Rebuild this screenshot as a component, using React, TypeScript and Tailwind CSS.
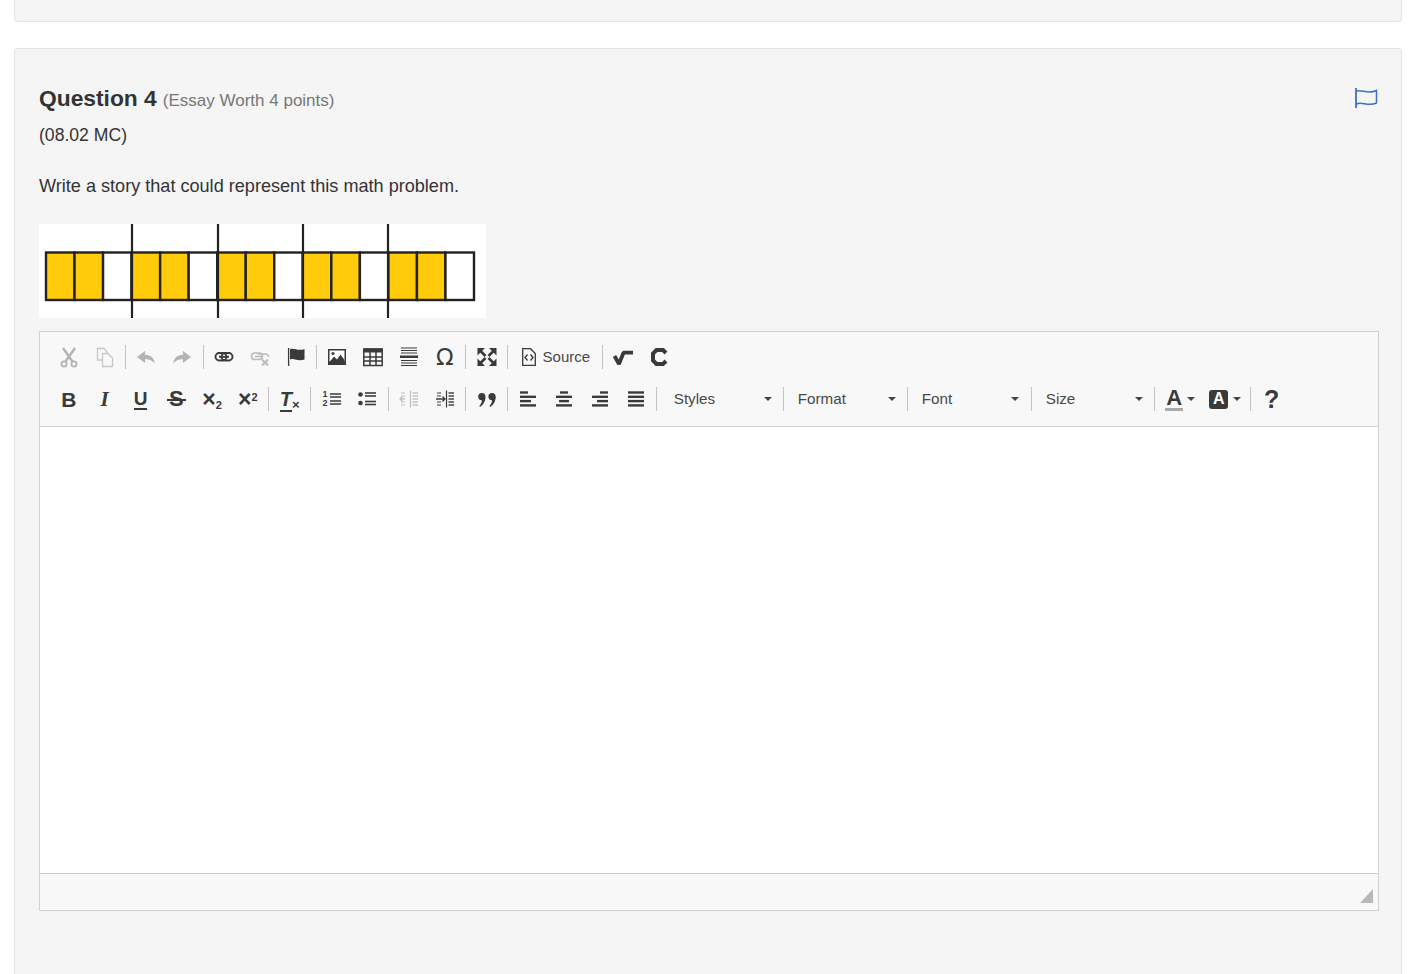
import React from "react";

const DARK = "#3a3a3a";
const GRAY = "#b4b4b4";

function Ico({ children }: { children: React.ReactNode }) {
  return (
    <svg width="24" height="24" viewBox="0 0 24 24" fill="none">
      {children}
    </svg>
  );
}

function Btn({ children }: { children: React.ReactNode }) {
  return <div className="flex h-full w-[35.8px] shrink-0 items-center justify-center">{children}</div>;
}

function Sep() {
  return (
    <div className="flex h-full w-[6px] shrink-0 items-center justify-center">
      <div className="h-[24px] w-px bg-[#c4c4c4]" />
    </div>
  );
}

function Caret() {
  return <div className="h-0 w-0 border-x-[4px] border-t-[4px] border-x-transparent border-t-[#444]" />;
}

function Combo({ label, w }: { label: string; w: string }) {
  return (
    <div className={`flex h-full shrink-0 items-center justify-between text-[15.2px] text-[#484848] ${w}`}>
      <span>{label}</span>
      <Caret />
    </div>
  );
}

const Cut = () => (
  <Ico>
    <g stroke={GRAY} strokeWidth="2.4">
      <path d="M6 3 L15.5 16.5" />
      <path d="M18 3 L8.5 16.5" />
      <circle cx="7" cy="19" r="2.6" strokeWidth="1.8" />
      <circle cx="17" cy="19" r="2.6" strokeWidth="1.8" />
    </g>
  </Ico>
);
const Copy = () => (
  <Ico>
    <g stroke="#c6c6c6" strokeWidth="1.3" fill="#f8f8f8">
      <path d="M4.5 3.5 H11 L14 6.5 V15 H4.5 Z" />
      <path d="M9.5 8.5 H15 L19.5 13 V21.5 H9.5 Z" />
    </g>
  </Ico>
);
const Undo = ({ flip }: { flip?: boolean }) => (
  <Ico>
    <path
      d="M3 12 L11 6 V9.8 C16 9.8 19.8 12.5 21 18.5 C18 15 15 14.2 11 14.2 V18 Z"
      fill={GRAY}
      transform={flip ? "translate(24 0) scale(-1 1)" : undefined}
    />
  </Ico>
);
const LinkI = () => (
  <Ico>
    <g stroke={DARK} strokeWidth="1.9">
      <rect x="3.5" y="8" width="11" height="7.5" rx="3.7" />
      <rect x="9.5" y="8" width="11" height="7.5" rx="3.7" />
      <path d="M7 11.8 H17" />
    </g>
  </Ico>
);
const Unlink = () => (
  <Ico>
    <g stroke="#bcbcbc" strokeWidth="1.6">
      <rect x="3.5" y="8" width="11" height="6.5" rx="3.2" />
      <path d="M9.5 9 H17 C19 9 20.5 10 20.5 12" />
      <path d="M7 11.5 H14" />
      <path d="M14 14.5 L20 20.5 M20 14.5 L14 20.5" strokeWidth="2" />
    </g>
  </Ico>
);
const Flag = () => (
  <Ico>
    <path d="M4.6 3 V21" stroke={DARK} strokeWidth="1.3" />
    <path d="M6 4.2 C10 2.5 14 6.5 20.5 4 V14.5 C14 17 10 12.5 6 14.5 Z" fill={DARK} />
  </Ico>
);
const ImageI = () => (
  <Ico>
    <rect x="3" y="4" width="18" height="16" fill={DARK} />
    <rect x="4.5" y="5.5" width="15" height="11" fill="#fff" />
    <circle cx="8" cy="8.5" r="1.6" fill={DARK} />
    <path d="M4.5 17 L9 11.5 L12 14.5 L15.5 9.5 L19.5 15 V17 Z" fill={DARK} />
  </Ico>
);
const TableI = () => (
  <Ico>
    <rect x="2.5" y="3.5" width="19" height="4" fill={DARK} />
    <g stroke={DARK} strokeWidth="1.5">
      <rect x="2.8" y="4" width="18.4" height="16.5" />
      <path d="M9 7 V20 M15 7 V20 M3 12 H21 M3 16 H21" />
    </g>
  </Ico>
);
const Hr = () => (
  <Ico>
    <g fill={DARK}>
      <rect x="4" y="2.5" width="16" height="1" />
      <rect x="4" y="5" width="16" height="1" />
      <rect x="4" y="7.5" width="16" height="1" />
      <rect x="3" y="10.5" width="18" height="2.5" />
      <rect x="4" y="15" width="16" height="1" />
      <rect x="4" y="17.5" width="16" height="1" />
      <rect x="4" y="20" width="16" height="1" />
    </g>
  </Ico>
);
const Maximize = () => (
  <Ico>
    <g fill={DARK} stroke={DARK}>
      <path d="M2.5 3 H10 L2.5 10.5 Z" strokeWidth="0" />
      <path d="M21.5 3 H14 L21.5 10.5 Z" strokeWidth="0" />
      <path d="M2.5 21 H10 L2.5 13.5 Z" strokeWidth="0" />
      <path d="M21.5 21 H14 L21.5 13.5 Z" strokeWidth="0" />
      <path d="M5 5.5 L10.5 11 M19 5.5 L13.5 11 M5 18.5 L10.5 13 M19 18.5 L13.5 13" strokeWidth="2.6" />
    </g>
  </Ico>
);
const SourceI = () => (
  <svg width="18" height="22" viewBox="0 0 18 22" fill="none">
    <path d="M2.7 2.7 H10.5 L15.3 7.5 V19.3 H2.7 Z" stroke={DARK} strokeWidth="1.3" />
    <path d="M7.5 8.5 L5 11.5 L7.5 14.5 M10.5 8.5 L13 11.5 L10.5 14.5" stroke={DARK} strokeWidth="1.4" />
  </svg>
);
const Sqrt = () => (
  <Ico>
    <path d="M3.5 11 L8 19 L12.5 7.7 H22" stroke={DARK} strokeWidth="3.8" strokeLinejoin="bevel" />
  </Ico>
);
const CIcon = () => (
  <Ico>
    <path d="M19 8 L16 5 H9.5 L6 8.5 V15.5 L9.5 19 H16 L19 16" stroke={DARK} strokeWidth="4" />
  </Ico>
);
const Strike = () => (
  <span className="relative text-[22px] font-bold leading-none text-[#3a3a3a]">
    S
    <span className="absolute left-[-2px] right-[-2px] top-[11px] h-[2px] bg-[#3a3a3a]" />
  </span>
);
const Lines = ({ x1, x2, ys, w = 1.8, c = DARK }: { x1: number; x2: number; ys: number[]; w?: number; c?: string }) => (
  <g stroke={c} strokeWidth={w}>
    {ys.map((y) => (
      <path key={y} d={`M${x1} ${y} H${x2}`} />
    ))}
  </g>
);
const ListOl = () => (
  <div className="flex items-center gap-[2px]">
    <div className="flex w-[6px] flex-col items-center text-[9px] font-bold leading-[9px] text-[#3a3a3a]">
      <span>1</span>
      <span>2</span>
    </div>
    <svg width="11" height="16" viewBox="0 0 11 16">
      <Lines x1={0} x2={11} ys={[3, 6, 10, 13]} w={1.5} />
    </svg>
  </div>
);
const ListUl = () => (
  <Ico>
    <circle cx="5.5" cy="7.5" r="2.3" fill={DARK} />
    <circle cx="5.5" cy="16" r="2.3" fill={DARK} />
    <Lines x1={10} x2={21} ys={[6, 9, 14.5, 17.5]} w={1.6} />
  </Ico>
);
const Indent = ({ c, out }: { c: string; out?: boolean }) => (
  <Ico>
    <path d="M13.5 3.5 V20.5" stroke={c} strokeWidth="1.2" />
    <Lines x1={15.5} x2={21} ys={[6, 9, 12, 15, 18]} w={1.4} c={c} />
    <Lines x1={4} x2={8} ys={[6, 9, 15, 18]} w={1} c={c} />
    {out ? (
      <path d="M3 12 H8 M5.5 9.5 L3 12 L5.5 14.5" stroke={c} strokeWidth="1.3" />
    ) : (
      <path d="M3 12 H12 M9.5 9.5 L12 12 L9.5 14.5" stroke={c} strokeWidth="1.3" />
    )}
  </Ico>
);
const Quote = () => (
  <Ico>
    <g fill={DARK}>
      <circle cx="6.8" cy="9.6" r="3.6" />
      <path d="M10.4 9.6 C10.6 14 8.5 18 5 20 L4.3 19 C6 17 7 15 7 12.5 Z" />
      <circle cx="17" cy="9.6" r="3.6" />
      <path d="M20.6 9.6 C20.8 14 18.7 18 15.2 20 L14.5 19 C16.2 17 17.2 15 17.2 12.5 Z" />
    </g>
  </Ico>
);
const Align = ({ rows }: { rows: [number, number][] }) => (
  <Ico>
    {rows.map(([a, b], i) => (
      <path key={i} d={`M${a} ${5.5 + i * 4.3} H${b}`} stroke={DARK} strokeWidth="2.4" />
    ))}
  </Ico>
);

function Chart() {
  const x0 = 7;
  const cw = 428 / 15;
  const cells = Array.from({ length: 15 }, (_, i) => i);
  return (
    <svg width="447" height="94" viewBox="0 0 447 94" className="block bg-white">
      {cells.map((i) => (
        <rect
          key={i}
          x={x0 + i * cw}
          y="28.5"
          width={cw}
          height="47.5"
          fill={i % 3 === 2 ? "#ffffff" : "#ffcb0a"}
          stroke="#222"
          strokeWidth="2.4"
        />
      ))}
      {[93, 179, 264, 349].map((x) => (
        <path key={x} d={`M${x} 0 V94`} stroke="#222" strokeWidth="2.2" />
      ))}
    </svg>
  );
}

export default function App() {
  return (
    <div className="h-[974px] overflow-hidden bg-white pl-[14px] pr-[20px] text-[#333] [font-family:'Liberation_Sans',Arial,sans-serif]">
      <div className="h-[22px] rounded-b-[4px] border-x border-b border-[#e3e3e3] bg-[#f5f5f5]" />
      <div className="mt-[26px] h-[940px] rounded-[4px] border border-[#e3e3e3] bg-[#f5f5f5] pl-[24px] pr-[22px] pt-[34px]">
        <div className="flex h-[30px] items-center justify-between">
          <div className="flex items-baseline gap-[6px]">
            <h2 className="text-[22.8px] font-bold leading-[30px] text-[#333]">Question 4</h2>
            <span className="text-[17px] text-[#777]">(Essay Worth 4 points)</span>
          </div>
          <svg width="26" height="24" viewBox="0 0 26 24" fill="none" className="mr-[-1px]">
            <path d="M2 2 V22" stroke="#3f6fc6" strokeWidth="1.8" />
            <path d="M2.5 5 C8 3 14 9 22.5 4.5 V17 C14 21 8 15 2.5 18" stroke="#3f6fc6" strokeWidth="1.5" />
          </svg>
        </div>
        <p className="mt-[9px] text-[17.6px] leading-[26px]">(08.02 MC)</p>
        <p className="mt-[25px] text-[18.1px] leading-[26px]">Write a story that could represent this math problem.</p>
        <div className="mt-[25px]">
          <Chart />
        </div>
        <div className="mt-[13px] border border-[#d1d1d1] bg-white">
          <div className="border-b border-[#d1d1d1] bg-[#f8f8f8] pb-[6px] pl-[11px] pt-[4px]">
            <div className="flex h-[42px] items-center">
              <Btn><Cut /></Btn>
              <Btn><Copy /></Btn>
              <Sep />
              <Btn><Undo /></Btn>
              <Btn><Undo flip /></Btn>
              <Sep />
              <Btn><LinkI /></Btn>
              <Btn><Unlink /></Btn>
              <Btn><Flag /></Btn>
              <Sep />
              <Btn><ImageI /></Btn>
              <Btn><TableI /></Btn>
              <Btn><Hr /></Btn>
              <Btn><span className="text-[23px] leading-none text-[#3a3a3a] [font-family:'DejaVu_Sans',sans-serif]">Ω</span></Btn>
              <Sep />
              <Btn><Maximize /></Btn>
              <Sep />
              <div className="flex h-full w-[89px] shrink-0 items-center pl-[9px] text-[15px] text-[#484848]">
                <SourceI />
                <span className="ml-[5px]">Source</span>
              </div>
              <Sep />
              <Btn><Sqrt /></Btn>
              <Btn><CIcon /></Btn>
            </div>
            <div className="flex h-[42px] items-center">
              <Btn><span className="text-[21px] font-bold leading-none text-[#3a3a3a]">B</span></Btn>
              <Btn><span className="text-[21px] font-bold italic leading-none text-[#3a3a3a] [font-family:'Liberation_Serif',serif]">I</span></Btn>
              <Btn><span className="border-b-2 border-[#3a3a3a] text-[19px] font-bold leading-[19px] text-[#3a3a3a]">U</span></Btn>
              <Btn><Strike /></Btn>
              <Btn><span className="text-[23px] font-bold leading-none text-[#3a3a3a]">×<sub className="text-[11px]">2</sub></span></Btn>
              <Btn><span className="text-[23px] font-bold leading-none text-[#3a3a3a]">×<sup className="text-[11px]">2</sup></span></Btn>
              <Sep />
              <Btn>
                <span className="text-[20px] font-bold italic leading-none text-[#3a3a3a]">
                  <span className="border-b-2 border-[#3a3a3a]">T</span>
                  <sub className="text-[13px] not-italic">×</sub>
                </span>
              </Btn>
              <Sep />
              <Btn><ListOl /></Btn>
              <Btn><ListUl /></Btn>
              <Sep />
              <Btn><Indent c="#c0c0c0" out /></Btn>
              <Btn><Indent c={DARK} /></Btn>
              <Sep />
              <Btn><Quote /></Btn>
              <Sep />
              <Btn><Align rows={[[4, 12], [4, 20], [4, 15], [4, 20]]} /></Btn>
              <Btn><Align rows={[[8, 16], [4, 20], [7, 17], [4, 20]]} /></Btn>
              <Btn><Align rows={[[12, 20], [4, 20], [9, 20], [4, 20]]} /></Btn>
              <Btn><Align rows={[[4, 20], [4, 20], [4, 20], [4, 20]]} /></Btn>
              <Sep />
              <Combo label="Styles" w="w-[121px] pl-[14px] pr-[9px]" />
              <Sep />
              <Combo label="Format" w="w-[118px] pl-[11px] pr-[9px]" />
              <Sep />
              <Combo label="Font" w="w-[118px] pl-[11px] pr-[10px]" />
              <Sep />
              <Combo label="Size" w="w-[117px] pl-[11px] pr-[9px]" />
              <Sep />
              <div className="flex h-full w-[45px] shrink-0 items-center justify-center gap-[4px]">
                <span className="border-b-[3px] border-[#a9a9a9] px-[1px] text-[22px] font-bold leading-[20px] text-[#3a3a3a]">A</span>
                <Caret />
              </div>
              <div className="flex h-full w-[45px] shrink-0 items-center justify-center gap-[5px]">
                <span className="flex h-[19px] w-[19px] items-center justify-center rounded-[3px] bg-[#3a3a3a] text-[16px] font-bold text-white">A</span>
                <Caret />
              </div>
              <Sep />
              <Btn><span className="text-[25px] font-bold leading-none text-[#3a3a3a]">?</span></Btn>
            </div>
          </div>
          <div className="h-[446px] bg-white" />
          <div className="flex h-[37px] items-end justify-end border-t border-[#d1d1d1] bg-[#f8f8f8] pb-[7px] pr-[5px]">
            <svg width="13" height="14" viewBox="0 0 13 14">
              <path d="M13 0 V14 H0 Z" fill="#b8b8b8" />
            </svg>
          </div>
        </div>
      </div>
    </div>
  );
}
